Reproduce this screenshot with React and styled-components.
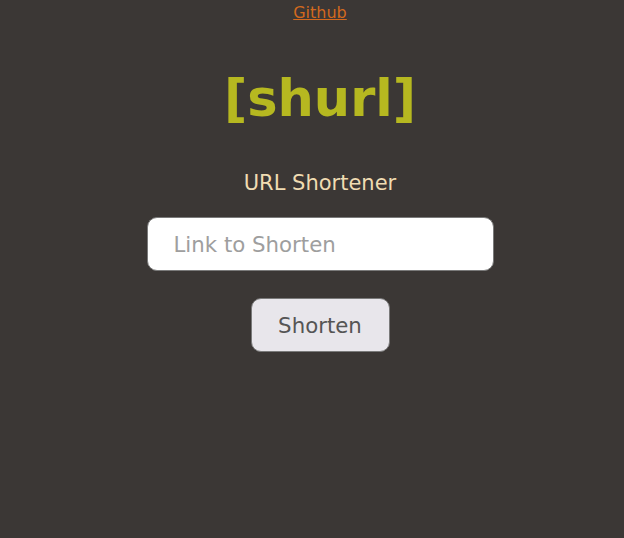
import React, { useState } from 'react';
import styled, { createGlobalStyle } from 'styled-components';

const GlobalStyle = createGlobalStyle`
  html, body {
    margin: 0;
    padding: 0;
    background: #3b3735;
    font-family: "DejaVu Sans", sans-serif;
  }
`;

const Page = styled.div`
  box-sizing: border-box;
  min-height: 538px;
  padding-left: 16px;
  display: flex;
  flex-direction: column;
  align-items: center;
`;

const RepoLink = styled.a`
  margin-top: 3px;
  font-size: 16px;
  color: #d2691e;
  text-decoration: underline;
`;

const Title = styled.h1`
  margin: 47px 0 0;
  font-size: 51px;
  font-weight: bold;
  color: #b6b820;
`;

const Subtitle = styled.h2`
  margin: 43px 0 0;
  font-size: 21px;
  font-weight: normal;
  color: #f0dcb2;
`;

const Form = styled.form`
  margin-top: 22px;
  display: flex;
  flex-direction: column;
  align-items: center;
  gap: 27px;
`;

const LinkInput = styled.input`
  box-sizing: border-box;
  width: 347px;
  height: 54px;
  padding: 0 26px;
  border: 1px solid #7a7a7a;
  border-radius: 10px;
  background: #fff;
  font-family: "DejaVu Sans", sans-serif;
  font-size: 21.3px;
  color: #333;
  outline: none;

  &::placeholder {
    color: #9e9e9e;
  }
`;

const ShortenButton = styled.button`
  box-sizing: border-box;
  width: 139px;
  height: 54px;
  border: 1px solid #7a7a7a;
  border-radius: 10px;
  background: #e8e6eb;
  font-family: "DejaVu Sans", sans-serif;
  font-size: 21.3px;
  color: #555;
  cursor: pointer;
`;

export default function App() {
  const [url, setUrl] = useState('');

  return (
    <>
      <GlobalStyle />
      <Page>
        <RepoLink href="#">Github</RepoLink>
        <Title>[shurl]</Title>
        <Subtitle>URL Shortener</Subtitle>
        <Form onSubmit={e => e.preventDefault()}>
          <LinkInput
            value={url}
            onChange={e => setUrl(e.target.value)}
            placeholder="Link to Shorten"
          />
          <ShortenButton type="submit">Shorten</ShortenButton>
        </Form>
      </Page>
    </>
  );
}
